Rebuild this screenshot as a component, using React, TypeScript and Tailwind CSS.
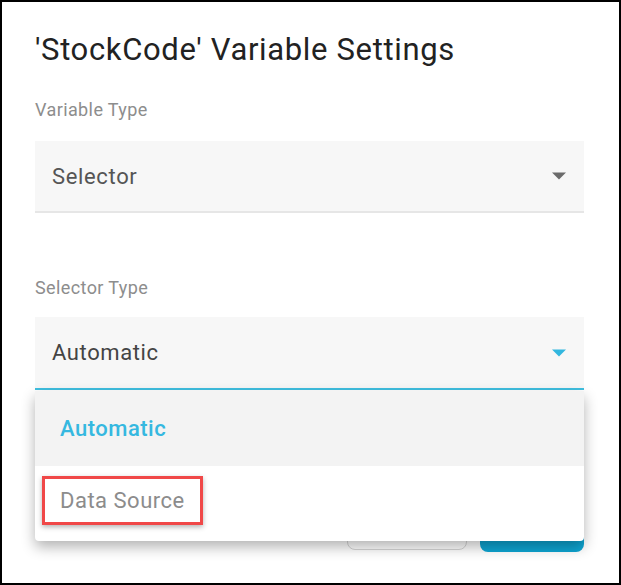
const font = { fontFamily: "Roboto, 'Liberation Sans', sans-serif" };

const Caret = ({ color }: { color: string }) => (
  <svg width="16" height="8" viewBox="0 0 16 8" className="shrink-0">
    <path d="M1 0.5 L15 0.5 L8 7.5 Z" fill={color} />
  </svg>
);

const App = () => {
  return (
    <div
      className="relative h-[585px] w-[621px] overflow-hidden border-2 border-black bg-white"
      style={font}
    >
      <div className="flex flex-col pl-[33px] pr-[35px] pt-[28px]">
        <h1 className="text-[31px] leading-[40px] tracking-[0.65px] text-[#222]">
          'StockCode' Variable Settings
        </h1>

        <p className="mt-[28px] text-[18px] leading-[24px] tracking-[0.4px] text-[#8d8d8d]">
          Variable Type
        </p>
        <div className="mt-[19px] flex h-[72px] items-center justify-between border-b-2 border-[#e6e6e6] bg-[#f7f7f7] pl-[17px] pr-[17px]">
          <span className="text-[22px] tracking-[0.65px] text-[#555]">
            Selector
          </span>
          <Caret color="#6b6b6b" />
        </div>

        <p className="mt-[63px] text-[18px] leading-[24px] tracking-[0.4px] text-[#8d8d8d]">
          Selector Type
        </p>
        <div className="mt-[17px] flex h-[73px] items-center justify-between border-b-2 border-[#3fbfe0] bg-[#f7f7f7] pl-[17px] pr-[17px]">
          <span className="text-[22px] tracking-[0.6px] text-[#444]">
            Automatic
          </span>
          <Caret color="#33b7df" />
        </div>

        <div className="mt-[122px] flex justify-end gap-[13px]">
          <button className="h-[38px] w-[120px] rounded-[8px] border border-[#d6d6d6] bg-white text-[15px] text-[#555]">
            Cancel
          </button>
          <button className="h-[40px] w-[104px] rounded-[8px] bg-[#0ea5d2] text-[15px] text-white">
            Save
          </button>
        </div>
      </div>

      {/* open select menu */}
      <div className="absolute left-[33px] top-[389px] w-[549px] overflow-hidden rounded-b-[4px] bg-white shadow-[0_6px_14px_rgba(0,0,0,0.3)]">
        <div className="flex h-[75px] items-center bg-[#f3f3f3] pl-[25px]">
          <span className="text-[22px] font-medium tracking-[0.5px] text-[#35b8e0]">
            Automatic
          </span>
        </div>
        <div className="flex h-[75px] items-start pl-[7px] pt-[10px]">
          <div className="flex h-[49px] w-[161px] items-center border-[3px] border-[#f04848] pl-[15px] shadow-[0_2px_5px_rgba(0,0,0,0.3)]">
            <span className="text-[22px] tracking-[0.5px] text-[#8c8c8c]">
              Data Source
            </span>
          </div>
        </div>
      </div>
    </div>
  );
};

export default App;
